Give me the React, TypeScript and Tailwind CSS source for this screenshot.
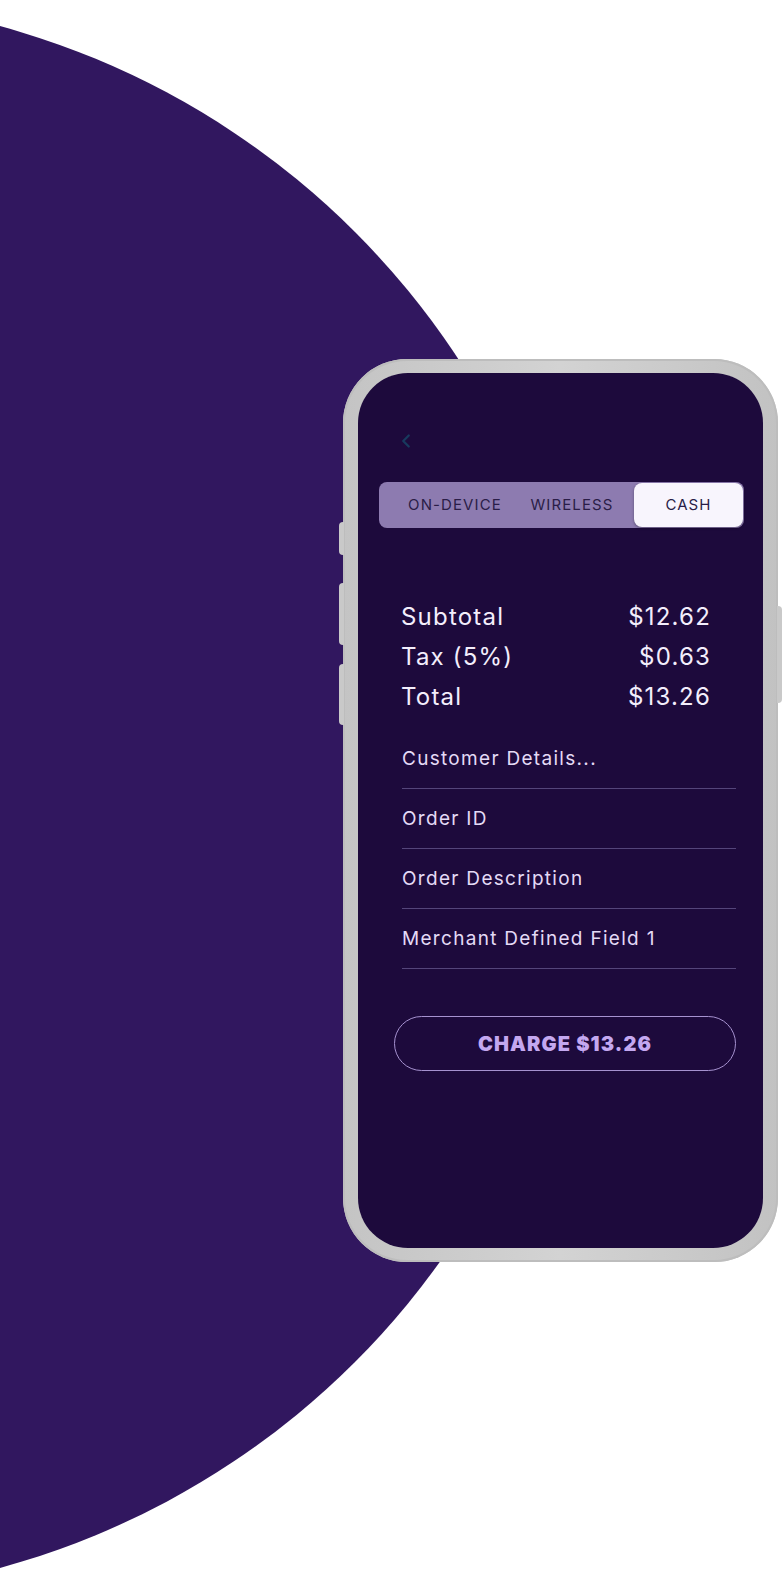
import { ChevronLeft } from 'lucide-react';

const summary = [
  { label: 'Subtotal', value: '$12.62' },
  { label: 'Tax (5%)', value: '$0.63' },
  { label: 'Total', value: '$13.26' },
];

const fields = ['Customer Details...', 'Order ID', 'Order Description', 'Merchant Defined Field 1'];

function PaymentTabs() {
  return (
    <div className="ml-[21px] mt-[32px] flex h-[46px] w-[365px] items-center rounded-lg bg-[#8d7bb0] p-px pl-[17px] text-[15px] tracking-[1.1px] text-[#2a1d47]">
      <div className="w-[118px] text-center">ON-DEVICE</div>
      <div className="w-[116px] text-center">WIRELESS</div>
      <div className="ml-auto flex h-full w-[109px] items-center justify-center rounded-lg bg-[#f8f5fd] shadow-[0_1px_3px_rgba(0,0,0,0.35)]">
        CASH
      </div>
    </div>
  );
}

function Phone() {
  return (
    <div className="relative ml-[343px] mt-[359px] h-[903px] w-[435px] rounded-[64px] bg-gradient-to-r from-[#c4c4c4] via-[#d3d3d3] to-[#c2c2c2] px-[15px] py-[14px] shadow-[inset_0_0_0_2px_#bdbdbd]">
      {/* side buttons */}
      <div className="absolute left-[-4px] top-[163px] h-[33px] w-[5px] rounded-l-sm bg-[#c9c9c9]" />
      <div className="absolute left-[-4px] top-[224px] h-[62px] w-[5px] rounded-l-sm bg-[#c9c9c9]" />
      <div className="absolute left-[-4px] top-[305px] h-[61px] w-[5px] rounded-l-sm bg-[#c9c9c9]" />
      <div className="absolute right-[-4px] top-[247px] h-[97px] w-[5px] rounded-r-sm bg-[#c9c9c9]" />

      <div className="flex h-full flex-col rounded-[50px] bg-[#1d0a3c] font-['Inter',sans-serif]">
        <div className="ml-[37px] mt-[57px] h-5 text-[#183a5e]">
          <ChevronLeft size={22} strokeWidth={2.5} />
        </div>

        <PaymentTabs />

        <div className="ml-[43px] mt-[69px] w-[310px] text-[24px] leading-[40px] tracking-[1.2px] text-[#f3eefc]">
          {summary.map((row) => (
            <div key={row.label} className="flex justify-between">
              <span>{row.label}</span>
              <span>{row.value}</span>
            </div>
          ))}
        </div>

        <div className="ml-[44px] mt-[12px] w-[334px]">
          {fields.map((f) => (
            <div key={f} className="flex h-[60px] items-center border-b border-[#54457a] pt-px text-[19px] tracking-[1.3px] text-[#e4daf6]">
              {f}
            </div>
          ))}
        </div>

        <button className="ml-[36px] mt-[47px] flex h-[55px] w-[342px] items-center justify-center rounded-full border border-[#a692d0] text-[20px] font-black tracking-[1.1px] text-[#c4a8f0]">
          CHARGE $13.26
        </button>
      </div>
    </div>
  );
}

export default function App() {
  return (
    <div className="relative h-[1596px] w-[783px] overflow-hidden bg-white">
      <div className="absolute left-[-1009px] top-[-2px] h-[1598px] w-[1598px] rounded-full bg-[#31175f]" />
      <div className="relative flex">
        <Phone />
      </div>
    </div>
  );
}
